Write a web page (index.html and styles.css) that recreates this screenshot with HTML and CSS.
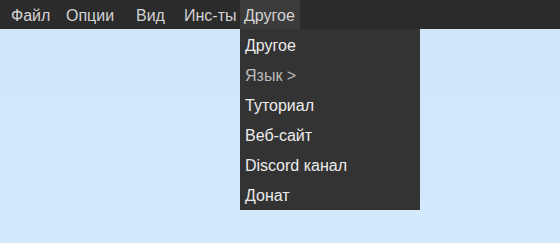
FILE: index.html
```html
<!DOCTYPE html>
<html lang="ru">
<head>
    <meta charset="UTF-8">
    <title>Меню</title>
    <link rel="stylesheet" href="styles.css">
</head>
<body>
    <nav class="menubar">
        <div class="menu-item w-file">Файл</div>
        <div class="menu-item w-opts">Опции</div>
        <div class="menu-item w-view">Вид</div>
        <div class="menu-item w-tools">Инс-ты</div>
        <div class="menu-item w-other active">
            Другое
            <div class="dropdown">
                <div class="drop-item">Другое</div>
                <div class="drop-item muted">Язык &gt;</div>
                <div class="drop-item">Туториал</div>
                <div class="drop-item">Веб-сайт</div>
                <div class="drop-item">Discord канал</div>
                <div class="drop-item">Донат</div>
            </div>
        </div>
    </nav>
</body>
</html>
```

FILE: styles.css
```css
body{
    margin: 0;
    height: 243px;
    background: linear-gradient(180deg, #cfe6fb, #d3eafd);
    font-family: "Liberation Sans", Arial, sans-serif;
    font-size: 16px;
}
.menubar{
    display: flex;
    height: 29px;
    padding-left: 7px;
    background-color: #2b2b2b;
}
.menu-item{
    position: relative;
    box-sizing: border-box;
    padding: 0 4px;
    line-height: 31px;
    height: 29px;
    white-space: nowrap;
    color: #d4d4d4;
}
/* larguras fixas dos itens */
.w-file{ width: 55px; }
.w-opts{ width: 70px; }
.w-view{ width: 48px; }
.w-tools{ width: 60px; }
.w-other{ width: 60px; }
.menu-item.active{
    background-color: #3c3c3c;
}
.dropdown{
    position: absolute;
    top: 29px;
    left: 0;
    width: 180px;
    padding-bottom: 1px;
    background-color: #333333;
}
.drop-item{
    height: 30px;
    line-height: 33px;
    padding-left: 5px;
    color: #ececec;
}
.drop-item.muted{
    color: #bdbdbd;
}
```
